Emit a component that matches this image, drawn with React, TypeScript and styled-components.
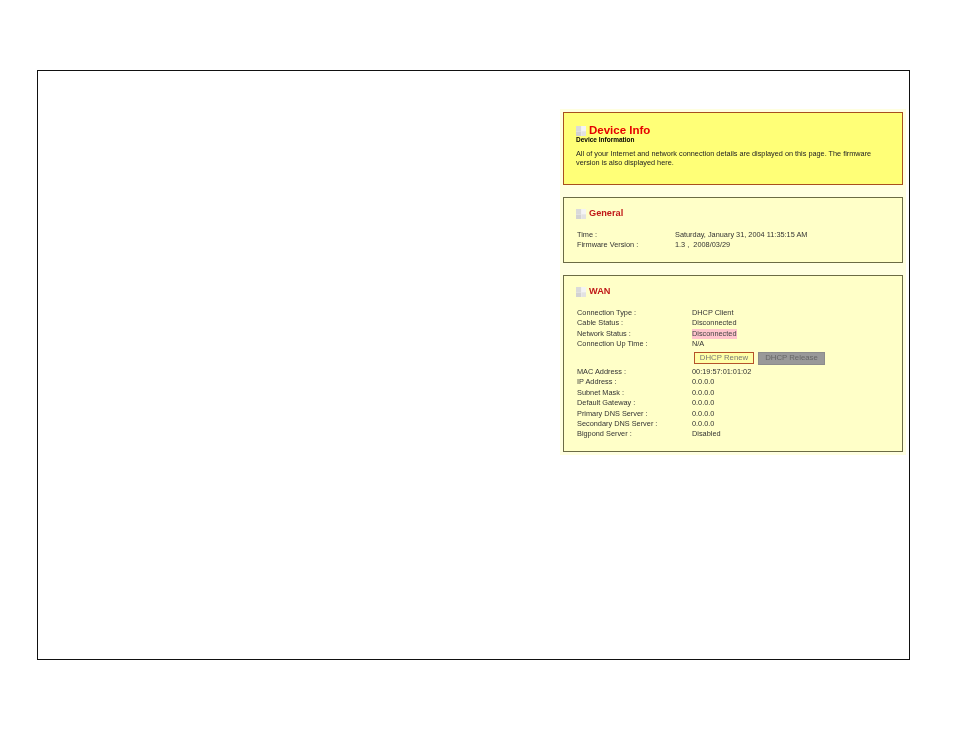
import React from "react";
import styled, { createGlobalStyle } from "styled-components";

const GlobalStyle = createGlobalStyle`
  html, body {
    margin: 0;
    background: #fff;
    font-family: "Liberation Sans", Arial, sans-serif;
  }
`;

const wanTop = [
  { label: "Connection Type :", value: "DHCP Client" },
  { label: "Cable Status :", value: "Disconnected" },
  { label: "Network Status :", value: "Disconnected", alert: true },
  { label: "Connection Up Time :", value: "N/A" },
];

const wanBottom = [
  { label: "MAC Address :", value: "00:19:57:01:01:02" },
  { label: "IP Address :", value: "0.0.0.0" },
  { label: "Subnet Mask :", value: "0.0.0.0" },
  { label: "Default Gateway :", value: "0.0.0.0" },
  { label: "Primary DNS Server :", value: "0.0.0.0" },
  { label: "Secondary DNS Server :", value: "0.0.0.0" },
  { label: "Bigpond Server :", value: "Disabled" },
];

const Bullet = () => (
  <svg width="10" height="10" viewBox="0 0 10 10">
    <rect x="0" y="0" width="10" height="10" fill="#eeeeee" />
    <rect x="0" y="0" width="5" height="5" fill="#dadada" />
    <rect x="5.5" y="0" width="4.5" height="5" fill="#f4f4f4" />
    <rect x="0" y="5.5" width="5" height="4.5" fill="#d2d2d2" />
    <rect x="5.5" y="5.5" width="4.5" height="4.5" fill="#e2e2e2" />
  </svg>
);

const App = () => {
  return (
    <>
      <GlobalStyle />
      <Page>
        <Frame>
          <Column>
            <Hero>
              <Heading>
                <Bullet />
                <HeroTitle>Device Info</HeroTitle>
              </Heading>
              <HeroSub>Device Information</HeroSub>
              <HeroText>
                All of your Internet and network connection details are displayed on this page. The firmware
                <br />
                version is also displayed here.
              </HeroText>
            </Hero>

            <GeneralPanel>
              <Heading>
                <Bullet />
                <SectionTitle>General</SectionTitle>
              </Heading>
              <GeneralRows>
                <Row $labelWidth={98}>
                  <span>Time :</span>
                  <span>Saturday, January 31, 2004 11:35:15 AM</span>
                </Row>
                <Row $labelWidth={98}>
                  <span>Firmware Version :</span>
                  <span>1.3 , &nbsp;2008/03/29</span>
                </Row>
              </GeneralRows>
            </GeneralPanel>

            <WanPanel>
              <Heading>
                <Bullet />
                <SectionTitle>WAN</SectionTitle>
              </Heading>
              <WanRows>
                {wanTop.map((row) => (
                  <Row key={row.label} $labelWidth={115}>
                    <span>{row.label}</span>
                    {row.alert ? <Alert>{row.value}</Alert> : <span>{row.value}</span>}
                  </Row>
                ))}
                <Buttons>
                  <RenewButton>DHCP Renew</RenewButton>
                  <ReleaseButton>DHCP Release</ReleaseButton>
                </Buttons>
                {wanBottom.map((row) => (
                  <Row key={row.label} $labelWidth={115}>
                    <span>{row.label}</span>
                    <span>{row.value}</span>
                  </Row>
                ))}
              </WanRows>
            </WanPanel>
          </Column>
        </Frame>
      </Page>
    </>
  );
};

const Page = styled.div`
  padding: 70px 44px 77px 37px;
`;

const Frame = styled.div`
  box-sizing: border-box;
  width: 873px;
  height: 590px;
  border: 1px solid #111;
  display: flex;
  justify-content: flex-end;
  align-items: flex-start;
  padding: 38px 3px 0 0;
`;

/* the reference is a scaled-down capture, hence the slight softening */
const Column = styled.div`
  box-sizing: border-box;
  width: 346px;
  padding: 3px;
  background: #ffffe0;
  display: flex;
  flex-direction: column;
  gap: 12px;
  filter: blur(0.4px);
`;

const Panel = styled.section`
  box-sizing: border-box;
  border: 1px solid #6b6b45;
  background: #ffffc8;
  padding: 0 12px;
`;

const Hero = styled(Panel)`
  height: 73px;
  padding-top: 11px;
  border-color: #a8501e;
  background: #ffff77;
`;

const GeneralPanel = styled(Panel)`
  height: 66px;
  padding-top: 10px;
`;

const WanPanel = styled(Panel)`
  height: 177px;
  padding-top: 10px;
`;

const Heading = styled.div`
  display: flex;
  align-items: center;
  gap: 3px;
`;

const HeroTitle = styled.h1`
  margin: 0;
  font-size: 11.5px;
  line-height: 13px;
  font-weight: 700;
  color: #e60000;
`;

const SectionTitle = styled.h2`
  margin: 0;
  font-size: 9.2px;
  line-height: 11px;
  font-weight: 700;
  color: #c01818;
`;

const HeroSub = styled.div`
  margin-top: -1px;
  font-size: 6.5px;
  line-height: 8px;
  font-weight: 700;
  color: #000;
`;

const HeroText = styled.p`
  margin: 6px 0 0;
  font-size: 7.3px;
  line-height: 8.7px;
  color: #222;
`;

const GeneralRows = styled.div`
  margin-top: 11px;
  padding-left: 1px;
`;

const WanRows = styled.div`
  margin-top: 11px;
  padding-left: 1px;
`;

const Row = styled.div<{ $labelWidth: number }>`
  display: grid;
  grid-template-columns: ${(p) => p.$labelWidth}px 1fr;
  font-size: 7.35px;
  line-height: 10.45px;
  height: 10.45px;
  color: #333;
  white-space: nowrap;
`;

const Alert = styled.span`
  justify-self: start;
  background: #ffc4cc;
  color: #444;
`;

const Buttons = styled.div`
  display: flex;
  gap: 4px;
  margin: 2px 0 2px 117px;
`;

const RenewButton = styled.button`
  box-sizing: border-box;
  width: 60px;
  height: 12px;
  padding: 0;
  border: 1px solid #b5532a;
  background: #ffffa8;
  color: #777;
  font: 7.8px/10px "Liberation Sans", Arial, sans-serif;
`;

const ReleaseButton = styled(RenewButton)`
  width: 67px;
  height: 13px;
  border: 1px solid #8c8c8c;
  background: #999;
  color: #666;
`;

export default App;
